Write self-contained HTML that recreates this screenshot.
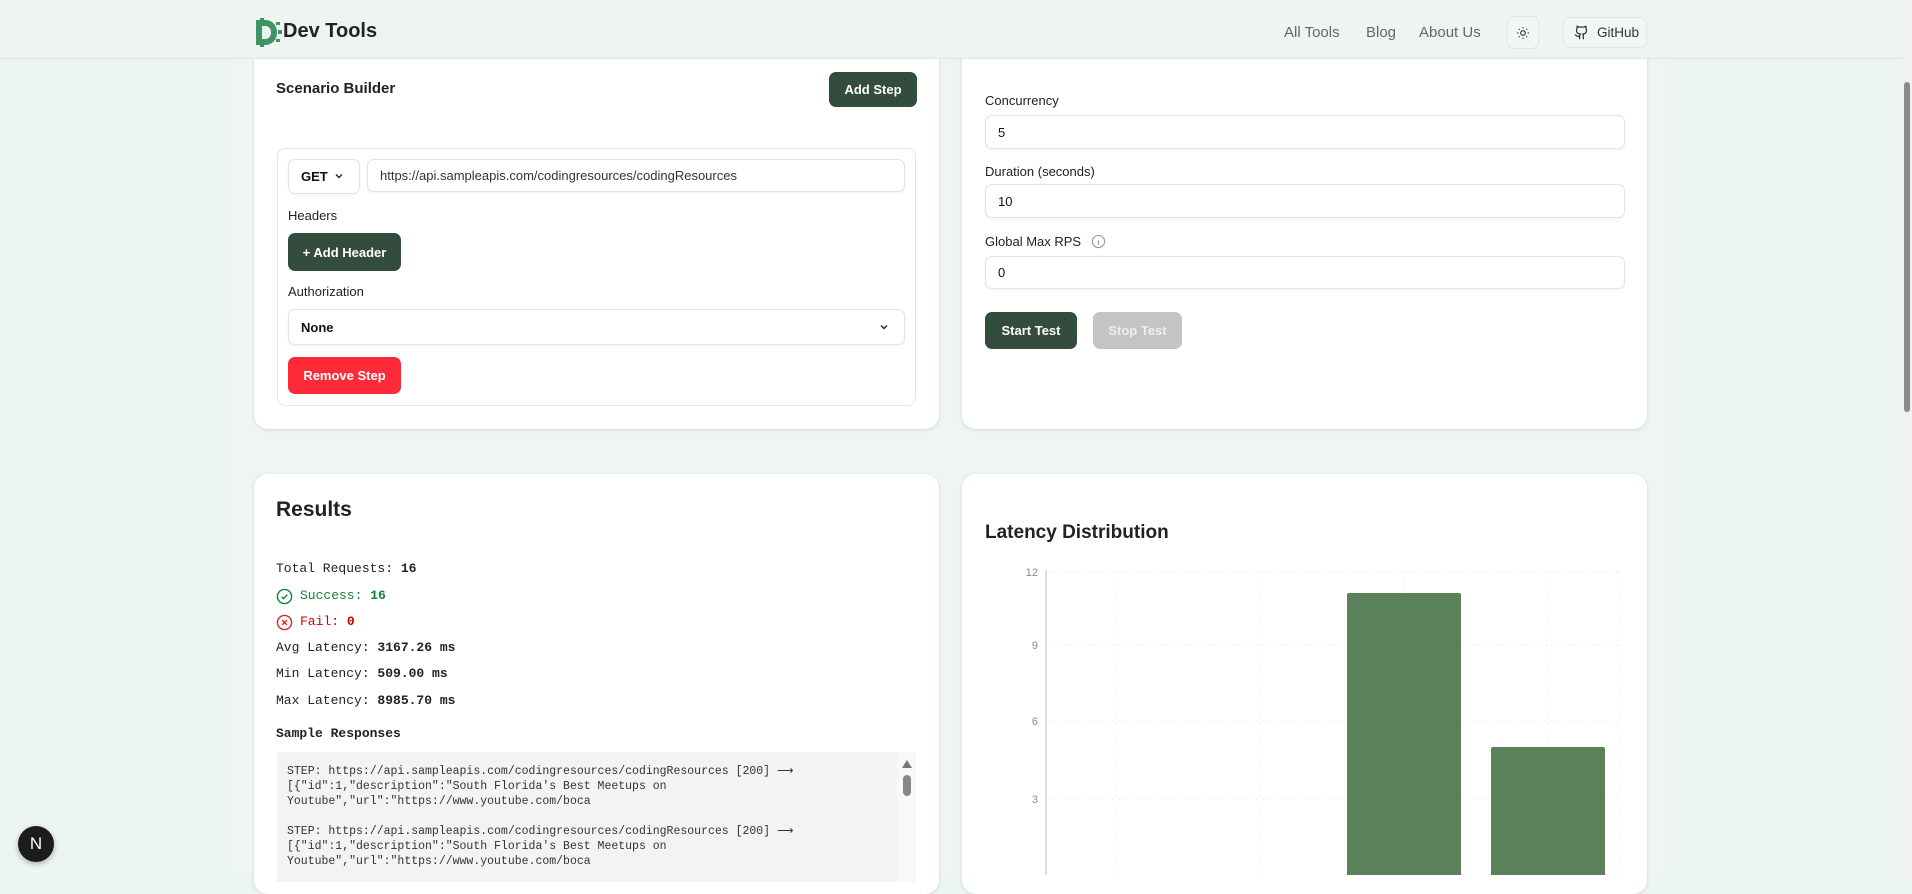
<!DOCTYPE html>
<html><head><meta charset="utf-8"><style>
*{box-sizing:border-box;margin:0;padding:0}
body{width:1912px;height:875px;overflow:hidden;background:#edf5f1;font-family:"Liberation Sans",sans-serif;color:#111;position:relative}
.abs{position:absolute}
.main{left:232px;top:0;width:1438px;height:875px;background:#eff6f2}
.hdr{left:0;top:0;width:1902px;height:59px;background:#eef5f1;border-bottom:1px solid #dde6e1}
.card{background:#fff;border-radius:14px;box-shadow:0 1px 4px rgba(0,0,0,.12)}
.btn{border-radius:7px;color:#fff;font-weight:bold;font-size:13px;display:flex;align-items:center;justify-content:center}
.dark{background:#344c3e}
.inp{border:1px solid #e2e4e3;border-radius:7px;background:#fff;box-shadow:0 1px 2px rgba(0,0,0,.06);font-size:13px;display:flex;align-items:center;padding-left:12px}
.lbl{font-size:13px;color:#222}
.mono{font-family:"Liberation Mono",monospace;font-size:13px;color:#222}
.code{font-family:"Liberation Mono",monospace;font-size:11.5px;color:#333;line-height:15px}
.nav{font-size:15px;color:#666}
.grid{stroke:#f0f0f0;stroke-dasharray:3 3}
</style></head><body>
<div class="abs main"></div>

<div class="abs card" style="left:254px;top:30px;width:685px;height:399px"></div>
<div class="abs card" style="left:962px;top:30px;width:685px;height:399px"></div>

<div class="abs hdr"></div>
<svg class="abs" style="left:254px;top:18px" width="28" height="29" viewBox="0 0 28 29">
<path d="M2 2h9c7 0 12 5 12 12.5S18 27 11 27H2z M8 8v13h3c4 0 6-3 6-6.5S15 8 11 8z" fill="#3f9466" fill-rule="evenodd"/>
<g fill="#3f9466"><rect x="22" y="4" width="4" height="3"/><rect x="24" y="12" width="4" height="4"/><rect x="22" y="21" width="4" height="3"/><rect x="6" y="0" width="4" height="3"/><rect x="6" y="26" width="4" height="3"/></g>
</svg>
<div class="abs" style="left:283px;top:20px;font-size:20px;font-weight:bold;color:#222">Dev Tools</div>
<div class="abs nav" style="left:1284px;top:24px">All Tools</div>
<div class="abs nav" style="left:1366px;top:24px">Blog</div>
<div class="abs nav" style="left:1419px;top:24px">About Us</div>
<div class="abs" style="left:1507px;top:16px;width:32px;height:33px;border:1px solid #e0e8e3;border-radius:7px;background:#f2f7f4;display:flex;align-items:center;justify-content:center">
<svg width="14" height="14" viewBox="0 0 24 24" fill="none" stroke="#333" stroke-width="2"><circle cx="12" cy="12" r="4"/><path d="M12 2v2M12 20v2M4.9 4.9l1.4 1.4M17.7 17.7l1.4 1.4M2 12h2M20 12h2M4.9 19.1l1.4-1.4M17.7 6.3l1.4-1.4"/></svg></div>
<div class="abs" style="left:1563px;top:17px;width:84px;height:31px;border:1px solid #e0e8e3;border-radius:7px;background:#f2f7f4;display:flex;align-items:center;padding-left:10px;font-size:13.5px;color:#333">
<svg width="15" height="15" viewBox="0 0 24 24" fill="none" stroke="#333" stroke-width="2" stroke-linecap="round"><path d="M15 22v-4a4.8 4.8 0 0 0-1-3.5c3 0 6-2 6-5.5.1-1.3-.3-2.5-1-3.5.3-1.1.3-2.3 0-3.5 0 0-1 0-3 1.5-2.6-.5-5.4-.5-8 0C6 2 5 2 5 2c-.3 1.2-.3 2.4 0 3.5A5.4 5.4 0 0 0 4 9c0 3.5 3 5.5 6 5.5-.4.5-.7 1.1-.8 1.7-.2.6-.2 1.2-.2 1.8v4M9 18c-4.5 2-5-2-7-2"/></svg>
<span style="margin-left:8px">GitHub</span></div>

<div class="abs" style="left:276px;top:80px;font-size:15px;font-weight:bold;color:#222">Scenario Builder</div>
<div class="abs btn dark" style="left:829px;top:72px;width:88px;height:35px">Add Step</div>
<div class="abs" style="left:277px;top:148px;width:639px;height:258px;border:1px solid #e6e8e7;border-radius:8px"></div>
<div class="abs inp" style="left:288px;top:159px;width:72px;height:35px;font-weight:bold">GET</div>
<svg class="abs" style="left:334px;top:171px" width="10" height="10" viewBox="0 0 10 10"><path d="M2 3.5l3 3 3-3" fill="none" stroke="#222" stroke-width="1.4"/></svg>
<div class="abs inp" style="left:367px;top:159px;width:538px;height:33px;color:#333">https://api.sampleapis.com/codingresources/codingResources</div>
<div class="abs lbl" style="left:288px;top:208px">Headers</div>
<div class="abs btn dark" style="left:288px;top:233px;width:113px;height:38px">+ Add Header</div>
<div class="abs lbl" style="left:288px;top:284px">Authorization</div>
<div class="abs inp" style="left:288px;top:309px;width:617px;height:36px;font-weight:bold">None</div>
<svg class="abs" style="left:879px;top:322px" width="10" height="10" viewBox="0 0 10 10"><path d="M2 3.5l3 3 3-3" fill="none" stroke="#222" stroke-width="1.4"/></svg>
<div class="abs btn" style="left:288px;top:357px;width:113px;height:37px;background:#ff2a37">Remove Step</div>

<div class="abs lbl" style="left:985px;top:93px">Concurrency</div>
<div class="abs inp" style="left:985px;top:115px;width:640px;height:34px">5</div>
<div class="abs lbl" style="left:985px;top:164px">Duration (seconds)</div>
<div class="abs inp" style="left:985px;top:184px;width:640px;height:34px">10</div>
<div class="abs lbl" style="left:985px;top:234px">Global Max RPS</div>
<svg class="abs" style="left:1091px;top:234px" width="15" height="15" viewBox="0 0 16 16"><circle cx="8" cy="8" r="6.5" fill="none" stroke="#999" stroke-width="1.2"/><path d="M8 7v4.5M8 4.8v.4" stroke="#999" stroke-width="1.3"/></svg>
<div class="abs inp" style="left:985px;top:256px;width:640px;height:33px">0</div>
<div class="abs btn dark" style="left:985px;top:312px;width:92px;height:37px">Start Test</div>
<div class="abs btn" style="left:1093px;top:312px;width:89px;height:37px;background:#c4c4c4;color:#eee">Stop Test</div>

<div class="abs card" style="left:254px;top:474px;width:685px;height:420px"></div>
<div class="abs" style="left:276px;top:498px;font-size:21px;font-weight:bold;color:#222">Results</div>
<div class="abs mono" style="left:276px;top:561px">Total Requests: <b>16</b></div>
<svg class="abs" style="left:276px;top:588px" width="17" height="17" viewBox="0 0 18 18"><circle cx="9" cy="9" r="7.5" fill="none" stroke="#15803d" stroke-width="1.5"/><path d="M6 9.2l2 2 4-4" fill="none" stroke="#15803d" stroke-width="1.5"/></svg>
<div class="abs mono" style="left:300px;top:588px;color:#15803d">Success: <b>16</b></div>
<svg class="abs" style="left:276px;top:614px" width="17" height="17" viewBox="0 0 18 18"><circle cx="9" cy="9" r="7.5" fill="none" stroke="#dc2626" stroke-width="1.5"/><path d="M6.5 6.5l5 5M11.5 6.5l-5 5" stroke="#dc2626" stroke-width="1.5"/></svg>
<div class="abs mono" style="left:300px;top:614px;color:#c00">Fail: <b>0</b></div>
<div class="abs mono" style="left:276px;top:640px">Avg Latency: <b>3167.26 ms</b></div>
<div class="abs mono" style="left:276px;top:666px">Min Latency: <b>509.00 ms</b></div>
<div class="abs mono" style="left:276px;top:693px">Max Latency: <b>8985.70 ms</b></div>
<div class="abs mono" style="left:276px;top:726px;font-weight:bold;font-size:13px">Sample Responses</div>
<div class="abs" style="left:277px;top:752px;width:620px;height:130px;background:#f2f3f4"></div>
<div class="abs" style="left:897px;top:752px;width:19px;height:130px;background:#f8f8f8"></div>
<svg class="abs" style="left:901px;top:758px" width="12" height="40" viewBox="0 0 12 40"><path d="M1 10L6 2l5 8z" fill="#777"/><rect x="2" y="17" width="8" height="21" rx="4" fill="#888"/></svg>
<div class="abs code" style="left:287px;top:764px">STEP: https://api.sampleapis.com/codingresources/codingResources [200] &#x27F6;<br>[{"id":1,"description":"South Florida's Best Meetups on<br>Youtube","url":"https://www.youtube.com/boca<br><br>STEP: https://api.sampleapis.com/codingresources/codingResources [200] &#x27F6;<br>[{"id":1,"description":"South Florida's Best Meetups on<br>Youtube","url":"https://www.youtube.com/boca</div>

<div class="abs card" style="left:962px;top:474px;width:685px;height:420px"></div>
<div class="abs" style="left:985px;top:522px;font-size:19px;font-weight:bold;color:#222">Latency Distribution</div>
<svg class="abs" style="left:1000px;top:560px" width="640" height="315" viewBox="0 0 640 315">
<g class="grid"><line x1="46" y1="12" x2="619" y2="12"/><line x1="46" y1="85" x2="619" y2="85"/><line x1="46" y1="161" x2="619" y2="161"/><line x1="46" y1="239" x2="619" y2="239"/>
<line x1="117" y1="12" x2="117" y2="315"/><line x1="261" y1="12" x2="261" y2="315"/><line x1="404" y1="12" x2="404" y2="315"/><line x1="547" y1="12" x2="547" y2="315"/><line x1="619" y1="12" x2="619" y2="315"/></g>
<line x1="46" y1="10" x2="46" y2="315" stroke="#c8ccb4" stroke-width="1.2"/>
<g font-family="Liberation Sans" font-size="11" fill="#888" text-anchor="end"><text x="38" y="16">12</text><text x="38" y="89">9</text><text x="38" y="165">6</text><text x="38" y="243">3</text></g>
<rect x="347" y="33" width="114" height="290" rx="2" fill="#5a8159"/>
<rect x="491" y="187" width="114" height="140" rx="2" fill="#5a8159"/>
</svg>

<div class="abs" style="left:1902px;top:0;width:10px;height:875px;background:#f1f1f1"></div>
<div class="abs" style="left:1904px;top:82px;width:6px;height:330px;background:#8a8a8a;border-radius:3px"></div>

<div class="abs" style="left:18px;top:826px;width:36px;height:36px;border-radius:50%;background:#1c1c1c;color:#fff;font-size:17px;display:flex;align-items:center;justify-content:center;box-shadow:0 2px 6px rgba(0,0,0,.3)">N</div>
</body></html>
